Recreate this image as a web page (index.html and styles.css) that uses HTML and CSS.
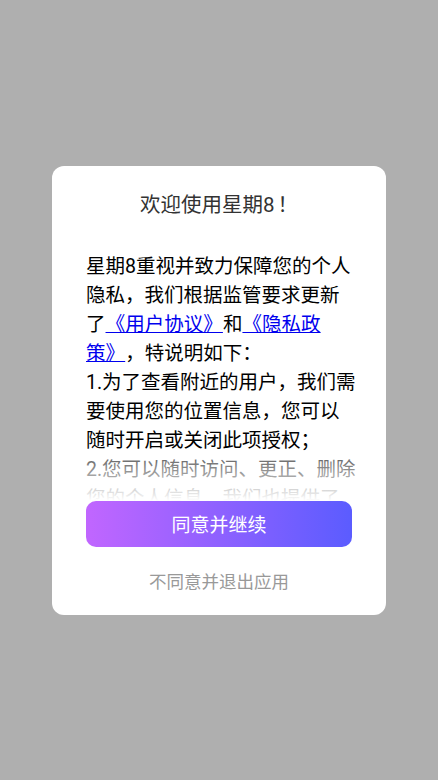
FILE: index.html
```html
<!DOCTYPE html>
<html lang="zh-CN">
<head>
<meta charset="utf-8">
<title>隐私协议</title>
<link rel="stylesheet" href="styles.css">
</head>
<body>
<div class="overlay">
  <div class="dialog">
    <div class="title">欢迎使用星期8<span class="bang">！</span></div>
    <div class="content">
      <p class="text">星期8重视并致力保障您的个人隐私，我们根据监管要求更新了<a href="#" class="link">&ensp;《用户协议》&ensp;</a>和<a href="#" class="link">&ensp;《隐私政策》&ensp;</a>，特说明如下：<br>1.为了查看附近的用户，我们需要使用您的位置信息，您可以随时开启或关闭此项授权；<br>2.您可以随时访问、更正、删除您的个人信息，我们也提供了账户注销的渠道；<br>3.未经您的同意，我们不会向第三方提供您的个人信息。</p>
    </div>
    <button class="agree">同意并继续</button>
    <div class="refuse">不同意并退出应用</div>
  </div>
</div>
</body>
</html>
```
FILE: styles.css
```css
html, body {
  margin: 0;
  padding: 0;
}
body {
  background: #afafaf;
  font-family: "Roboto", "Noto Sans CJK SC", "Noto Sans", sans-serif;
}
.overlay {
  width: 438px;
  height: 780px;
  display: flex;
  align-items: center;
  justify-content: center;
}
.dialog {
  width: 334px;
  box-sizing: border-box;
  background: #fff;
  border-radius: 12px;
  padding: 24px 34px 21px;
  display: flex;
  flex-direction: column;
}
.title {
  font-size: 20.5px;
  line-height: 30px;
  height: 30px;
  color: #333;
  text-align: center;
}
.bang {
  padding-left: 3px;
}
.content {
  margin-top: 32px;
  margin-right: -5px;
  height: 249px;
  overflow: hidden;
  position: relative;
}
.content::after {
  content: "";
  position: absolute;
  left: 0;
  right: 0;
  bottom: 0;
  height: 50px;
  background: linear-gradient(to bottom, rgba(255,255,255,0.3), #fff);
}
.text {
  margin: 0;
  font-size: 19.5px;
  line-height: 29px;
  color: #000;
}
.link {
  color: #0000ee;
  text-decoration: underline;
  font-feature-settings: "halt" 1;
}
.agree {
  height: 46px;
  border: none;
  border-radius: 10px;
  background: linear-gradient(90deg, #c166ff, #5b5cff);
  color: #fff;
  font-family: inherit;
  font-size: 19px;
  padding: 0;
}
.refuse {
  margin-top: 23px;
  font-size: 17.5px;
  line-height: 24px;
  color: #999;
  text-align: center;
}
```
